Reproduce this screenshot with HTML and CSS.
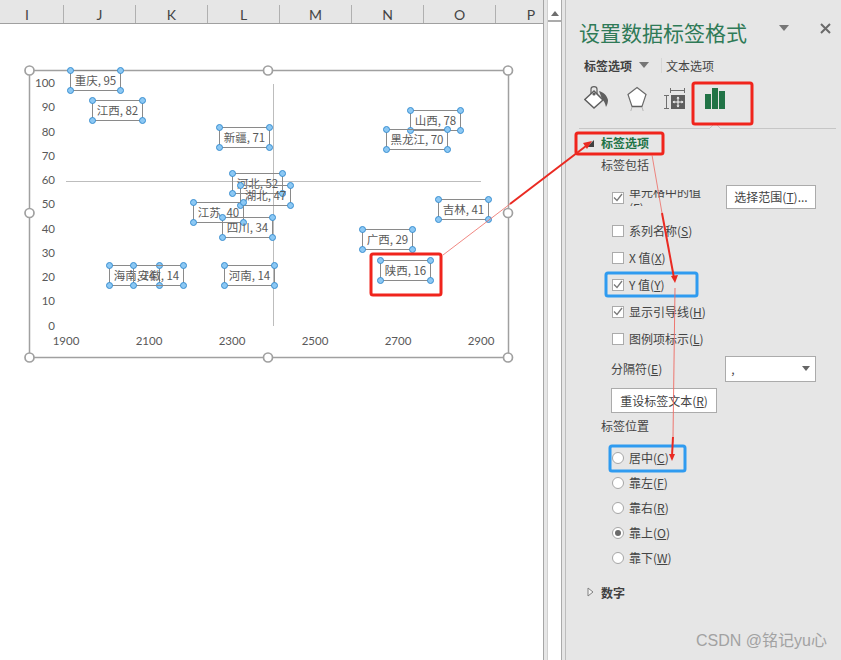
FILE: index.html
```html
<!DOCTYPE html>
<html lang="zh-CN">
<head>
<meta charset="utf-8">
<title>设置数据标签格式</title>
<link rel="stylesheet" href="styles.css">
</head>
<body>
<div class="app">
  <div class="sheet">
    <div class="col-head">
      <div class="col col-i">I</div><div class="col">J</div><div class="col">K</div><div class="col">L</div><div class="col">M</div><div class="col">N</div><div class="col">O</div><div class="col col-p">P</div>
    </div>
    <div class="canvas">
      <svg class="chart-lines" width="543" height="636" viewBox="0 24 543 636">
        <rect x="29.5" y="70.5" width="479" height="287" fill="none" stroke="#a0a0a0" stroke-width="1.5"/>
        <line x1="66" y1="181.5" x2="481" y2="181.5" stroke="#bdbdbd"/>
        <line x1="273.5" y1="84" x2="273.5" y2="326" stroke="#bdbdbd"/>
        <g fill="#fff" stroke="#a0a0a0" stroke-width="1.7">
          <circle cx="29.5" cy="70.5" r="4.5"/><circle cx="268" cy="70.5" r="4.5"/><circle cx="508" cy="70.5" r="4.5"/>
          <circle cx="29.5" cy="213" r="4.5"/><circle cx="508" cy="213" r="4.5"/>
          <circle cx="29.5" cy="357.5" r="4.5"/><circle cx="268" cy="357.5" r="4.5"/><circle cx="508" cy="357.5" r="4.5"/>
        </g>
      </svg>
      <span class="y y100">100</span><span class="y y90">90</span><span class="y y80">80</span><span class="y y70">70</span><span class="y y60">60</span><span class="y y50">50</span><span class="y y40">40</span><span class="y y30">30</span><span class="y y20">20</span><span class="y y10">10</span><span class="y y0">0</span>
      <span class="x x1">1900</span><span class="x x2">2100</span><span class="x x3">2300</span><span class="x x4">2500</span><span class="x x5">2700</span><span class="x x6">2900</span>

      <div class="lb l-cq">重庆, 95<i class="tl"></i><i class="tr"></i><i class="bl"></i><i class="br"></i></div>
      <div class="lb l-jx">江西, 82<i class="tl"></i><i class="tr"></i><i class="bl"></i><i class="br"></i></div>
      <div class="lb l-sx">山西, 78<i class="tl"></i><i class="tr"></i><i class="bl"></i><i class="br"></i></div>
      <div class="lb l-xj">新疆, 71<i class="tl"></i><i class="tr"></i><i class="bl"></i><i class="br"></i></div>
      <div class="lb l-hlj">黑龙江, 70<i class="tl"></i><i class="tr"></i><i class="bl"></i><i class="br"></i></div>
      <div class="lb l-hb">河北, 52<i class="tl"></i><i class="tr"></i><i class="bl"></i><i class="br"></i></div>
      <div class="lb l-hub">湖北, 47<i class="tl"></i><i class="tr"></i><i class="bl"></i><i class="br"></i></div>
      <div class="lb l-js">江苏, 40<i class="tl"></i><i class="tr"></i><i class="bl"></i><i class="br"></i></div>
      <div class="lb l-sc">四川, 34<i class="tl"></i><i class="tr"></i><i class="bl"></i><i class="br"></i></div>
      <div class="lb l-hn">海南, 14<i class="tl"></i><i class="tr"></i><i class="bl"></i><i class="br"></i></div>
      <div class="lb l-ah">安徽, 14<i class="tl"></i><i class="tr"></i><i class="bl"></i><i class="br"></i></div>
      <div class="lb l-hen">河南, 14<i class="tl"></i><i class="tr"></i><i class="bl"></i><i class="br"></i></div>
      <div class="lb l-jl">吉林, 41<i class="tl"></i><i class="tr"></i><i class="bl"></i><i class="br"></i></div>
      <div class="lb l-gx">广西, 29<i class="tl"></i><i class="tr"></i><i class="bl"></i><i class="br"></i></div>
      <div class="lb l-shx">陕西, 16<i class="tl"></i><i class="tr"></i><i class="bl"></i><i class="br"></i></div>
    </div>
  </div>

  <div class="scrollbar"><div class="scroll-up"><svg width="8" height="5" viewBox="0 0 8 5"><path d="M4 0 8 5H0Z" fill="#6e6e6e"/></svg></div></div>

  <aside class="pane">
    <header class="pane-title">
      <h1>设置数据标签格式</h1>
      <svg class="title-caret" width="10" height="6" viewBox="0 0 10 6"><path d="M0 0H10L5 6Z" fill="#767676"/></svg>
      <svg class="title-close" width="11" height="11" viewBox="0 0 11 11"><path d="M1 1 10 10M10 1 1 10" stroke="#6a6a6a" stroke-width="2"/></svg>
    </header>
    <div class="tabs">
      <span class="tab-on">标签选项</span>
      <svg class="tab-caret" width="10" height="6" viewBox="0 0 10 6"><path d="M0 0H10L5 6Z" fill="#767676"/></svg>
      <span class="tab-sep"></span>
      <span class="tab-off">文本选项</span>
    </div>
    <div class="icons">
      <svg class="ic-fill" width="25" height="24" viewBox="0 0 25 24">
        <path d="M15 5c4 1 8 4 9 9 0 3-1 5-2 7-1-4-2-6-4-8Z" fill="#5f5f5f"/>
        <path d="M10 5 .8 13.500 10 22 19 14Z" fill="#fff" stroke="#5f5f5f" stroke-width="1.500"/>
        <path d="M7 8V3a3 2.400 0 0 1 6 0v5" fill="none" stroke="#5f5f5f" stroke-width="1.200"/>
        <circle cx="10" cy="8" r="1.600" fill="#5f5f5f"/>
      </svg>
      <svg class="ic-shape" width="22" height="25" viewBox="0 0 22 25">
        <path d="M11 1.500 20 8.500 16 20.500H6L2 8.500Z" fill="#fff" stroke="#6a6a6a" stroke-width="1.200"/>
        <path d="M6 20.500H16" stroke="#5f5f5f" stroke-width="1.500"/>
        <path d="M6 21 4.800 25M16 21 17.200 25" stroke="#b5b5b5"/>
      </svg>
      <svg class="ic-size" width="22" height="25" viewBox="0 0 22 25">
        <path d="M6 4.500H21M6.500 2V7M20.500 2V7M0 9.500H5M0 22.500H5M2.500 9.500V22.500" stroke="#6f6f6f" fill="none"/>
        <rect x="7" y="9" width="14" height="14" fill="#5f5f5f"/>
        <path d="M14 11.500V20.500M9.500 16H18.500" stroke="#fff"/>
        <path d="M14 10.500 12.500 12.500H15.500ZM14 21.500 12.500 19.500H15.500ZM8.500 16 10.500 14.500V17.500ZM19.500 16 17.500 14.500V17.500Z" fill="#fff"/>
      </svg>
      <svg class="ic-bars" width="20" height="21" viewBox="0 0 20 21">
        <path d="M0 6H6V21H0ZM7 0H13V21H7ZM14 3H20V21H14Z" fill="#217346"/>
      </svg>
    </div>
    <div class="rule"><svg class="notch" width="16" height="6" viewBox="0 0 16 6"><path d="M0 6H2L8 0 14 6H16" fill="#e6e6e6" stroke="#c6c6c6"/></svg></div>

    <div class="sec-head">
      <svg width="7" height="7" viewBox="0 0 7 7"><path d="M7 0V7H0Z" fill="#404040"/></svg>
      <span class="sec-on">标签选项</span>
    </div>
    <div class="sub sub-inc">标签包括</div>

    <div class="row row-cell">
      <span class="cb on"><svg width="10" height="9" viewBox="0 0 10 9"><path d="M1 4.500 4 7.500 9 1" fill="none" stroke="#7a7a7a" stroke-width="1.300"/></svg></span>
      <span class="cell-text"><span class="cell-inner">单元格中的值<br>(F)</span></span>
      <button class="btn btn-range">选择范围(<u>T</u>)...</button>
    </div>
    <div class="row"><span class="cb"></span><span>系列名称(<u>S</u>)</span></div>
    <div class="row"><span class="cb"></span><span>X 值(<u>X</u>)</span></div>
    <div class="row"><span class="cb on"><svg width="10" height="9" viewBox="0 0 10 9"><path d="M1 4.500 4 7.500 9 1" fill="none" stroke="#7a7a7a" stroke-width="1.300"/></svg></span><span>Y 值(<u>Y</u>)</span></div>
    <div class="row"><span class="cb on"><svg width="10" height="9" viewBox="0 0 10 9"><path d="M1 4.500 4 7.500 9 1" fill="none" stroke="#7a7a7a" stroke-width="1.300"/></svg></span><span>显示引导线(<u>H</u>)</span></div>
    <div class="row"><span class="cb"></span><span>图例项标示(<u>L</u>)</span></div>

    <div class="sep-row">
      <span>分隔符(<u>E</u>)</span>
      <div class="select"><span>,</span><svg width="8" height="5" viewBox="0 0 8 5"><path d="M0 0H8L4 5Z" fill="#666"/></svg></div>
    </div>
    <button class="btn btn-reset">重设标签文本(<u>R</u>)</button>
    <div class="sub sub-pos">标签位置</div>

    <div class="radio"><span class="rd"></span><span>居中(<u>C</u>)</span></div>
    <div class="radio"><span class="rd"></span><span>靠左(<u>F</u>)</span></div>
    <div class="radio"><span class="rd"></span><span>靠右(<u>R</u>)</span></div>
    <div class="radio"><span class="rd sel"></span><span>靠上(<u>O</u>)</span></div>
    <div class="radio"><span class="rd"></span><span>靠下(<u>W</u>)</span></div>

    <div class="sec-num">
      <svg width="7" height="10" viewBox="0 0 7 10"><path d="M1 1 6 5 1 9Z" fill="#f4f4f4" stroke="#808080"/></svg>
      <span>数字</span>
    </div>
  </aside>

  <svg class="marks" width="841" height="660" viewBox="0 0 841 660">
    <g fill="none" stroke="#f0241c" stroke-width="3" stroke-linejoin="round">
      <rect x="371" y="254" width="70" height="41" rx="2"/>
      <rect x="576" y="133" width="87" height="21" rx="2"/>
      <rect x="693" y="83" width="59" height="41" rx="2"/>
    </g>
    <g fill="none" stroke="#2f9bf0" stroke-width="3" stroke-linejoin="round">
      <rect x="606" y="273" width="91" height="23" rx="2"/>
      <rect x="610" y="446" width="75" height="25" rx="2"/>
    </g>
    <g fill="none" stroke="#ea2a22">
      <path d="M443 255 510 204" stroke-width=".8" stroke="#ee6a62"/>
      <path d="M510 204 586 146" stroke-width="2"/>
      <path d="M652 155 662 213" stroke-width=".8" stroke="#ee6a62"/>
      <path d="M662 213 674 278" stroke-width="2"/>
      <path d="M675 288 673 437" stroke-width=".9" stroke="#ee6a62"/>
      <path d="M673 437 672 456" stroke-width="2"/>
    </g>
    <g fill="#ea2a22">
      <path d="M592 141 583 143 587 149Z"/>
      <path d="M675 283 671 276 678 275Z"/>
      <path d="M672 461 669 454 675 454Z"/>
    </g>
  </svg>
  <div class="watermark">CSDN @铭记yu心</div>
</div>
</body>
</html>
```
FILE: styles.css
```css
* { box-sizing: border-box; }
html, body { margin: 0; padding: 0; }
body {
  width: 841px; height: 660px; overflow: hidden;
  font-family: "Noto Sans CJK SC", "Liberation Sans", sans-serif;
  background: #e6e6e6; color: #444;
}
.app { position: relative; display: flex; width: 841px; height: 660px; overflow: hidden; }

/* sheet */
.sheet { width: 544px; height: 660px; flex: none; display: flex; flex-direction: column; border-right: 1px solid #a6a6a6; }
.col-head {
  height: 24px; flex: none; padding-top: 5px; display: flex;
  background: #e6e6e6; border-bottom: 1px solid #a0a0a0;
}
.col {
  width: 72px; flex: none; height: 18px; text-align: center;
  font: 14px/20px "Lato", "Liberation Sans", sans-serif; color: #444;
  border-right: 1px solid #b0b0b0;
}
.col-i { width: 64px; padding-right: 10px; padding-left: 1px; }
.col-p { border-right: 0; width: 60px; padding-left: 10px; }
.canvas { position: relative; flex: 1; background: #fff; }
.chart-lines { position: absolute; left: 0; top: 0; }

.y, .x {
  position: absolute; font: 11.500px/14px "Lato", "Liberation Sans", sans-serif; color: #595959;
}
.y { right: 488px; }
.y100 { top: 52px; } .y90 { top: 76px; } .y80 { top: 101px; } .y70 { top: 125px; } .y60 { top: 149px; }
.y50 { top: 173px; } .y40 { top: 198px; } .y30 { top: 222px; } .y20 { top: 246px; } .y10 { top: 270px; } .y0 { top: 295px; }
.x { top: 310px; width: 40px; text-align: center; }
.x1 { left: 46px; } .x2 { left: 129px; } .x3 { left: 212px; } .x4 { left: 295px; } .x5 { left: 378px; } .x6 { left: 461px; }

/* data labels */
.lb {
  position: absolute; width: 51px; height: 21px; border: 1px solid #8a8a8a;
  font-size: 11.500px; line-height: 18px; text-align: center; color: #595959; white-space: nowrap;
}
.lb i {
  position: absolute; width: 7px; height: 7px; border-radius: 50%;
  background: #8cc8f4; border: 1px solid #3a8fd0;
}
.lb .tl { left: -4px; top: -4px; } .lb .tr { right: -4px; top: -4px; }
.lb .bl { left: -4px; bottom: -4px; } .lb .br { right: -4px; bottom: -4px; }
.l-cq { left: 70px; top: 46px; }
.l-jx { left: 92px; top: 76px; }
.l-sx { left: 410px; top: 86px; }
.l-xj { left: 219px; top: 103px; }
.l-hlj { left: 386px; top: 105px; width: 62px; }
.l-hb { left: 232px; top: 149px; }
.l-hub { left: 240px; top: 161px; background: transparent; }
.l-js { left: 193px; top: 178px; }
.l-sc { left: 222px; top: 193px; }
.l-hn { left: 109px; top: 241px; }
.l-ah { left: 133px; top: 241px; }
.l-hen { left: 224px; top: 241px; }
.l-jl { left: 438px; top: 175px; }
.l-gx { left: 362px; top: 205px; }
.l-shx { left: 380px; top: 236px; }

/* scrollbar */
.scrollbar {
  margin-left: 3px; width: 15px; height: 660px; flex: none; padding-top: 7px;
  background: #fff; border-left: 1px solid #d0d0d0; border-right: 1px solid #ababab;
}
.scroll-up { height: 15px; display: flex; align-items: center; justify-content: center; border-bottom: 2px solid #ababab; }

/* task pane */
.pane {
  margin-left: 3px; flex: 1; height: 660px; padding-left: 13px;
  border-left: 1px solid #bdbdbd; background: #e6e6e6;
  font-size: 12px; color: #444;
}
.pane-title { height: 53px; padding-top: 16px; display: flex; align-items: flex-start; position: relative; }
.pane-title h1 { margin: 0; font-size: 21px; line-height: 32px; font-weight: 400; color: #2f7a57; white-space: nowrap; }
.title-caret { margin: 9px 0 0 32px; }
.title-close { margin: 7px 0 0 31px; }
.tabs { height: 25px; display: flex; align-items: center; padding-left: 5px; padding-bottom: 1px; }
.tab-on { font-weight: 700; color: #404040; }
.tab-caret { margin-left: 7px; }
.tab-sep { width: 1px; height: 15px; background: #d6d6d6; margin: 0 4px 0 12px; }
.tab-off { color: #444; }
.icons { height: 50px; display: flex; align-items: flex-start; padding: 8px 0 0 5px; }
.ic-fill { flex: none; }
.ic-shape { margin-left: 17px; flex: none; }
.ic-size { margin-left: 16px; flex: none; }
.ic-bars { margin-left: 19px; margin-top: 2px; flex: none; }
.rule { width: 257px; height: 1px; background: #c6c6c6; position: relative; }
.notch { position: absolute; left: 128px; top: -5px; }

.sec-head { height: 28px; display: flex; align-items: center; padding-left: 8px; }
.sec-head svg { flex: none; }
.sec-on { margin-left: 7px; font-weight: 700; color: #217346; line-height: 28px; }
.sub { padding-left: 22px; height: 18px; line-height: 18px; }
.sub-inc { height: 17px; line-height: 16px; }

.row { height: 27px; display: flex; align-items: center; padding-left: 33px; gap: 5px; white-space: nowrap; }
.row-cell { height: 39px; margin-top: 4px; }
.cb {
  width: 12px; height: 12px; flex: none; background: #fff; border: 1px solid #ababab;
  display: flex; align-items: center; justify-content: center;
}
.cell-text { height: 16px; overflow: hidden; width: 90px; flex: none; }
.cell-inner { display: block; line-height: 16px; margin-top: -6px; }
.btn {
  font: inherit; color: #444; background: #fff; border: 1px solid #ababab; padding: 0; white-space: nowrap;
}
.btn-range { width: 90px; height: 24px; margin-left: 2px; position: relative; top: -1px; }
.sep-row { height: 27px; margin-top: 3px; display: flex; align-items: center; padding-left: 32px; }
.select {
  width: 91px; height: 26px; margin-left: 63px; background: #fff; border: 1px solid #ababab;
  display: flex; align-items: center; justify-content: space-between; padding: 0 5px;
}
.btn-reset { display: block; width: 106px; height: 25px; margin: 6px 0 0 32px; }
.sub-pos { margin-top: 4px; height: 18px; }

.radio { height: 25px; display: flex; align-items: center; padding-left: 33px; gap: 5px; white-space: nowrap; }
.sub-pos + .radio { margin-top: 10px; }
.rd {
  width: 12px; height: 12px; border-radius: 50%; flex: none; background: #fff; border: 1px solid #a6a6a6;
  display: flex; align-items: center; justify-content: center;
}
.rd.sel::after { content: ""; width: 6px; height: 6px; border-radius: 50%; background: #6a6a6a; }

.sec-num { margin-top: 12px; height: 20px; display: flex; align-items: center; padding-left: 8px; font-weight: 700; color: #404040; }
.sec-num span { margin-left: 7px; }

.marks { position: absolute; left: 0; top: 0; pointer-events: none; }
.watermark {
  position: absolute; left: 696px; top: 630px; font-size: 16px; line-height: 22px;
  color: #a2a2a2; white-space: nowrap; font-family: "Liberation Sans", "Noto Sans CJK SC", sans-serif;
}
```
